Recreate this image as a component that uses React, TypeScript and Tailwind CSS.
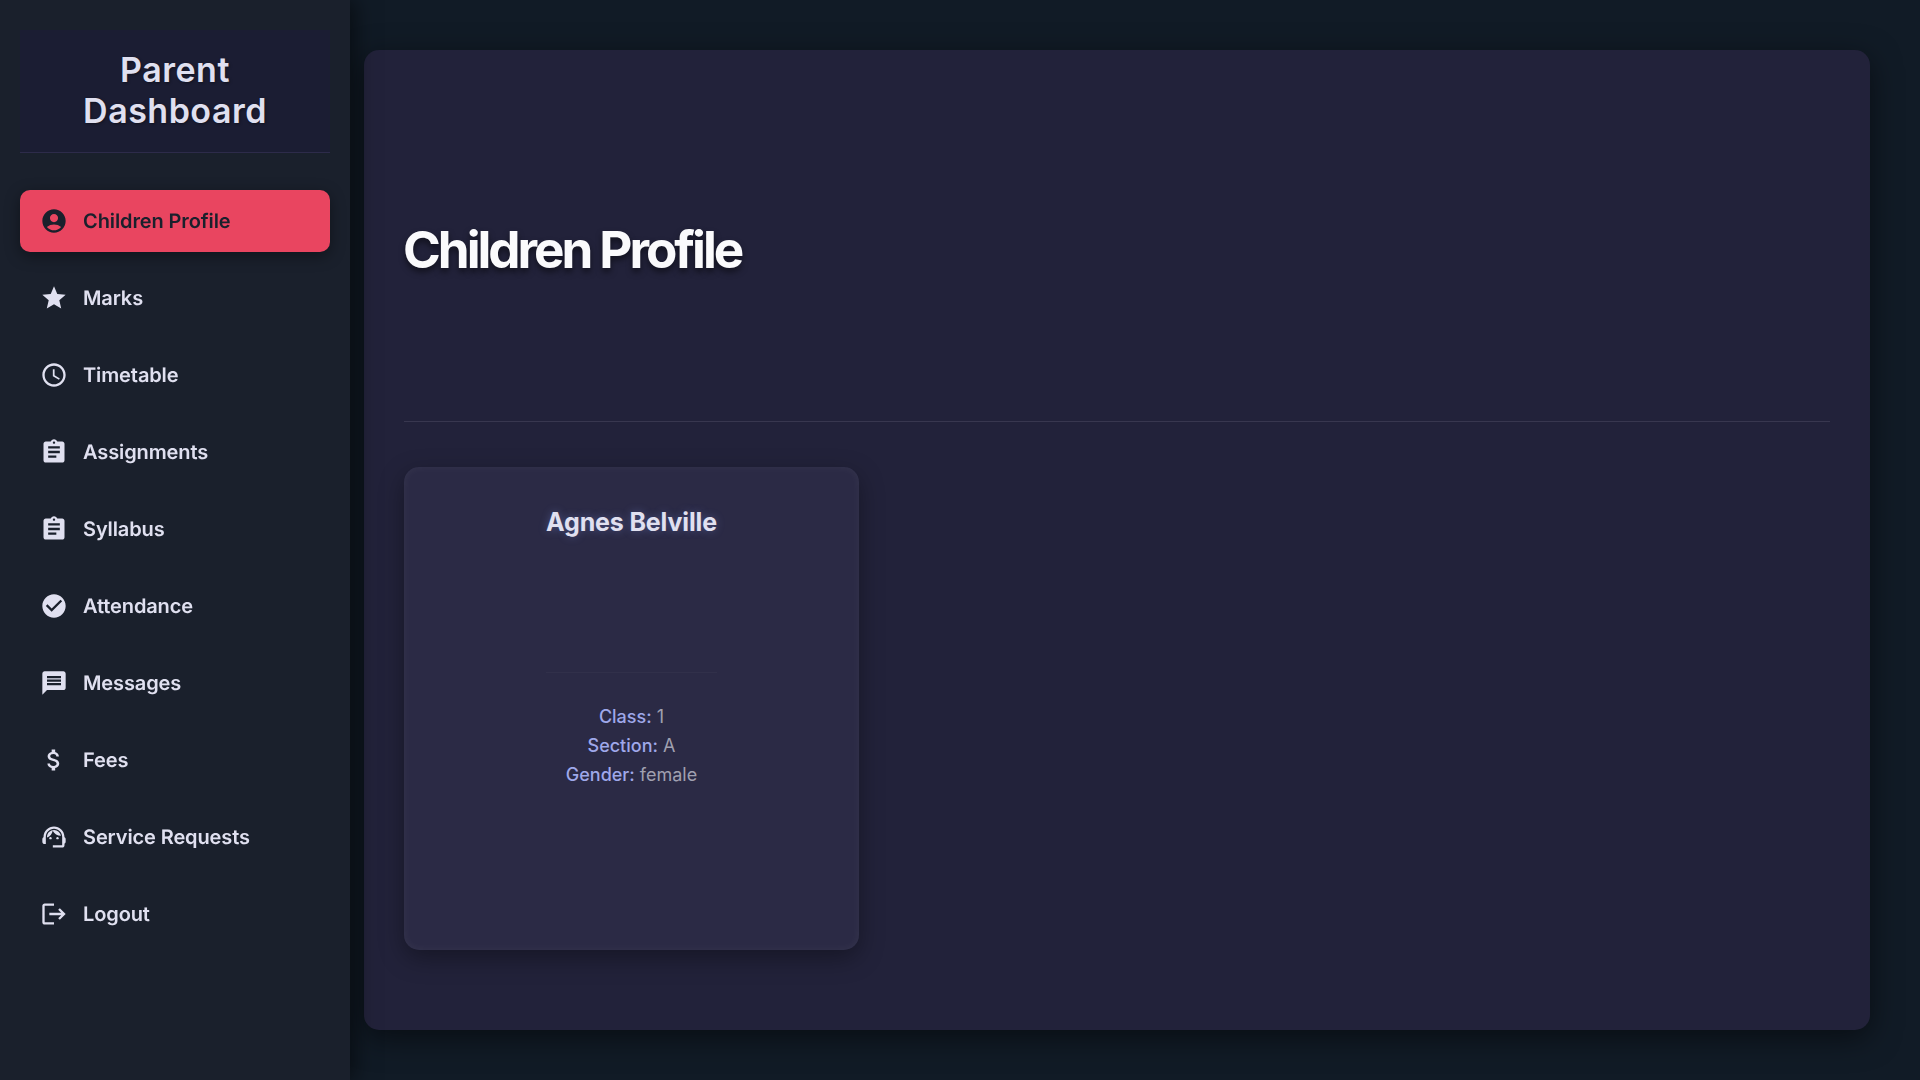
import type { IconType } from 'react-icons';
import {
  MdAccountCircle,
  MdStar,
  MdAccessTime,
  MdAssignment,
  MdCheckCircle,
  MdMessage,
  MdAttachMoney,
  MdSupportAgent,
  MdLogout,
} from 'react-icons/md';

type NavItem = { label: string; icon: IconType; active?: boolean };

const navItems: NavItem[] = [
  { label: 'Children Profile', icon: MdAccountCircle, active: true },
  { label: 'Marks', icon: MdStar },
  { label: 'Timetable', icon: MdAccessTime },
  { label: 'Assignments', icon: MdAssignment },
  { label: 'Syllabus', icon: MdAssignment },
  { label: 'Attendance', icon: MdCheckCircle },
  { label: 'Messages', icon: MdMessage },
  { label: 'Fees', icon: MdAttachMoney },
  { label: 'Service Requests', icon: MdSupportAgent },
  { label: 'Logout', icon: MdLogout },
];

const details = [
  { label: 'Class', value: '1' },
  { label: 'Section', value: 'A' },
  { label: 'Gender', value: 'female' },
];

function Sidebar() {
  return (
    <aside className="z-10 flex h-full w-[350px] shrink-0 flex-col bg-[#1a202c] px-5 pt-[30px] shadow-[5px_0_20px_rgba(0,0,0,0.5)]">
      <h2 className="mb-[37px] border-b border-[#2d2b4a] bg-[#1b1d33] px-5 pt-[19px] pb-[21px] text-center text-[34px] leading-[41px] font-semibold tracking-[0.5px] text-[#e0e0f0] [text-shadow:1px_1px_3px_rgba(0,0,0,0.4)]">
        Parent
        <br />
        Dashboard
      </h2>
      <nav className="flex flex-col gap-[15px]">
        {navItems.map(({ label, icon: Icon, active }) => (
          <a
            key={label}
            className={
              active
                ? 'flex h-[62px] items-center rounded-[10px] bg-[#e94560] px-5 text-[#1a202c] shadow-[0_4px_15px_rgba(0,0,0,0.4)] will-change-transform'
                : 'flex h-[62px] items-center rounded-[10px] px-5 text-[#e0e0f0] will-change-transform'
            }
          >
            <Icon className="mr-[15px] size-7 shrink-0" />
            <span className="text-[20px] leading-[30px] font-[560] tracking-[-0.11px] [text-rendering:geometricPrecision]">
              {label}
            </span>
          </a>
        ))}
      </nav>
    </aside>
  );
}

function ChildCard() {
  return (
    <article className="flex h-[483px] w-[455px] flex-col items-center rounded-[15px] bg-[#2b2a45] pt-[35px] shadow-[0_8px_25px_rgba(0,0,0,0.35),inset_0_0_10px_rgba(255,255,255,0.05)]">
      <h3 className="h-[171px] border-b border-white/[0.03] text-[25px] leading-[41px] font-bold tracking-[-0.15px] text-[#e0e0f0] [text-shadow:0_0_8px_rgba(120,140,220,0.4)]">
        Agnes Belville
      </h3>
      <div className="mt-[29px] text-center text-[18px] leading-[29px] text-[#a0a0b0]">
        {details.map(({ label, value }) => (
          <p key={label}>
            <span className="font-medium text-[#9fa8ea]">{label}:</span> {value}
          </p>
        ))}
      </div>
    </article>
  );
}

export default function App() {
  return (
    <div className="flex h-screen w-full overflow-hidden bg-[#111b26] font-['Inter',sans-serif]">
      <Sidebar />
      <main className="mt-[50px] mr-[50px] ml-[14px] h-[980px] flex-1 rounded-[15px] bg-[#22223a] px-10 shadow-[0_8px_30px_rgba(0,0,0,0.5)]">
        <header className="flex h-[372px] items-center border-b border-[#38374f] pt-7">
          <h1 className="-ml-px text-[51.2px] font-bold tracking-[-3.05px] text-[#fafafc] [text-shadow:0_4px_6px_rgba(0,0,0,0.5)]">
            Children Profile
          </h1>
        </header>
        <section className="pt-[45px]">
          <ChildCard />
        </section>
      </main>
    </div>
  );
}
